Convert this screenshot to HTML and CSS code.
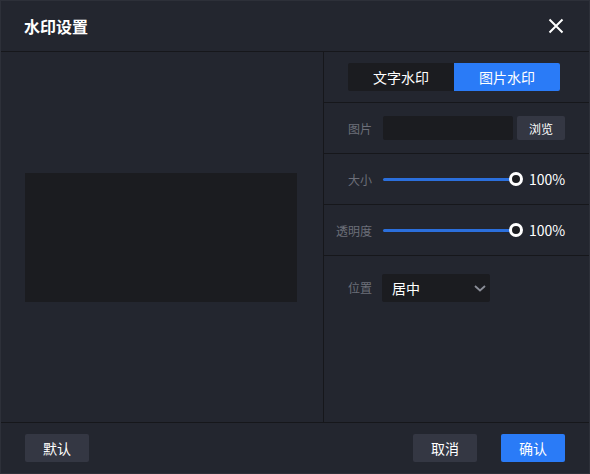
FILE: index.html
```html
<!DOCTYPE html>
<html lang="zh-CN">
<head>
    <meta charset="UTF-8">
    <meta name="viewport" content="width=device-width, initial-scale=1.0">
    <title>水印设置</title>
    <link rel="stylesheet" href="styles.css">
</head>
<body>
    <div class="dialog">
        <div class="dialog-header">
            <h1>水印设置</h1>
            <button class="close-btn" aria-label="关闭">
                <svg width="16" height="16" viewBox="0 0 16 16">
                    <path d="M1.5 1.5 L14.5 14.5 M14.5 1.5 L1.5 14.5" stroke="#fff" stroke-width="2" fill="none"/>
                </svg>
            </button>
        </div>

        <div class="dialog-body">
            <div class="preview-pane">
                <div class="preview-box"></div>
            </div>

            <div class="settings-pane">
                <div class="tabs-row">
                    <div class="tabs">
                        <button class="tab">文字水印</button>
                        <button class="tab active">图片水印</button>
                    </div>
                </div>

                <div class="setting-row">
                    <label>图片</label>
                    <input type="text" class="file-input">
                    <button class="browse-btn">浏览</button>
                </div>

                <div class="setting-row">
                    <label>大小</label>
                    <div class="slider"><div class="slider-fill"></div><div class="slider-thumb"></div></div>
                    <span class="slider-value">100%</span>
                </div>

                <div class="setting-row">
                    <label>透明度</label>
                    <div class="slider"><div class="slider-fill"></div><div class="slider-thumb"></div></div>
                    <span class="slider-value">100%</span>
                </div>

                <div class="setting-row last">
                    <label>位置</label>
                    <div class="select">
                        <span>居中</span>
                        <svg width="12" height="7" viewBox="0 0 12 7">
                            <path d="M1 1 L6 5.5 L11 1" stroke="#8b8e98" stroke-width="1.8" fill="none"/>
                        </svg>
                    </div>
                </div>
            </div>
        </div>

        <div class="dialog-footer">
            <button class="btn">默认</button>
            <div class="footer-actions">
                <button class="btn">取消</button>
                <button class="btn primary">确认</button>
            </div>
        </div>
    </div>
</body>
</html>
```

FILE: styles.css
```css
* {
    box-sizing: border-box;
}
body {
    margin: 0;
    font-family: "Noto Sans CJK SC", "Noto Sans", sans-serif;
    background-color: #23262f;
}
button {
    font-family: inherit;
    border: none;
    cursor: pointer;
    padding: 0;
}
.dialog {
    width: 590px;
    height: 474px;
    display: flex;
    flex-direction: column;
    background-color: #23262f;
    border: 1px solid #2d3039;
}
.dialog-header {
    height: 51px;
    flex-shrink: 0;
    display: flex;
    align-items: center;
    justify-content: space-between;
    padding: 0 25px 0 23px;
    border-bottom: 1px solid #16171b;
}
.dialog-header h1 {
    margin: 0;
    font-size: 16px;
    font-weight: bold;
    color: #fff;
    line-height: 1;
    padding-bottom: 1px;
}
.close-btn {
    width: 16px;
    height: 16px;
    background: none;
    display: flex;
}
.dialog-body {
    height: 371px;
    flex-shrink: 0;
    display: flex;
    border-bottom: 1px solid #16171b;
}
/* preview area, box centred slightly left of the pane */
.preview-pane {
    width: 323px;
    border-right: 1px solid #16171b;
    display: flex;
    align-items: center;
    justify-content: center;
    padding: 1px 2px 0 0;
}
.preview-box {
    width: 272px;
    height: 129px;
    background-color: #1b1c20;
}
.settings-pane {
    flex: 1;
    display: flex;
    flex-direction: column;
}
.tabs-row {
    height: 51px;
    display: flex;
    align-items: center;
    padding-left: 24px;
    border-bottom: 1px solid #16171b;
}
.tabs {
    display: flex;
    border-radius: 2px;
    overflow: hidden;
}
.tab {
    width: 106px;
    height: 28px;
    font-size: 14px;
    color: #fff;
    background-color: #1b1c20;
}
.tab.active {
    background-color: #2a7bf7;
}
.setting-row {
    height: 51px;
    display: flex;
    align-items: center;
    padding-right: 24px;
    border-bottom: 1px solid #16171b;
}
.setting-row.last {
    flex: 1;
    align-items: flex-start;
    padding-top: 18px;
    border-bottom: none;
}
.setting-row label {
    width: 48px;
    margin-right: 11px;
    text-align: right;
    font-size: 12px;
    color: #6c6f79;
}
.setting-row.last label {
    line-height: 28px;
}
.file-input {
    width: 130px;
    height: 24px;
    border: none;
    border-radius: 2px;
    background-color: #1b1c20;
    outline: none;
}
.browse-btn {
    width: 48px;
    height: 24px;
    margin-left: 4px;
    border-radius: 2px;
    font-size: 12px;
    color: #fff;
    background-color: #343743;
}
.slider {
    position: relative;
    width: 140px;
    height: 14px;
}
.slider-fill {
    position: absolute;
    left: 0;
    right: 7px;
    top: 6px;
    height: 3px;
    border-radius: 2px;
    background-color: #2b6fdc;
}
.slider-thumb {
    position: absolute;
    right: 0;
    top: 0;
    width: 14px;
    height: 14px;
    border-radius: 50%;
    border: 3px solid #fff;
    background-color: #1b1c20;
}
.slider-value {
    width: 36px;
    margin-left: 6px;
    font-size: 14px;
    color: #fff;
    text-align: right;
}
.select {
    width: 108px;
    height: 28px;
    margin-left: -1px;
    border-radius: 2px;
    background-color: #1b1c20;
    display: flex;
    align-items: center;
    justify-content: space-between;
    padding: 0 4px 0 10px;
    font-size: 14px;
    color: #fff;
}
.dialog-footer {
    flex: 1;
    display: flex;
    align-items: center;
    justify-content: space-between;
    padding: 0 24px;
}
.footer-actions {
    display: flex;
    gap: 24px;
}
.btn {
    width: 64px;
    height: 28px;
    border-radius: 2px;
    font-size: 14px;
    color: #fff;
    background-color: #343743;
}
.btn.primary {
    background-color: #2a7bf7;
}
```
